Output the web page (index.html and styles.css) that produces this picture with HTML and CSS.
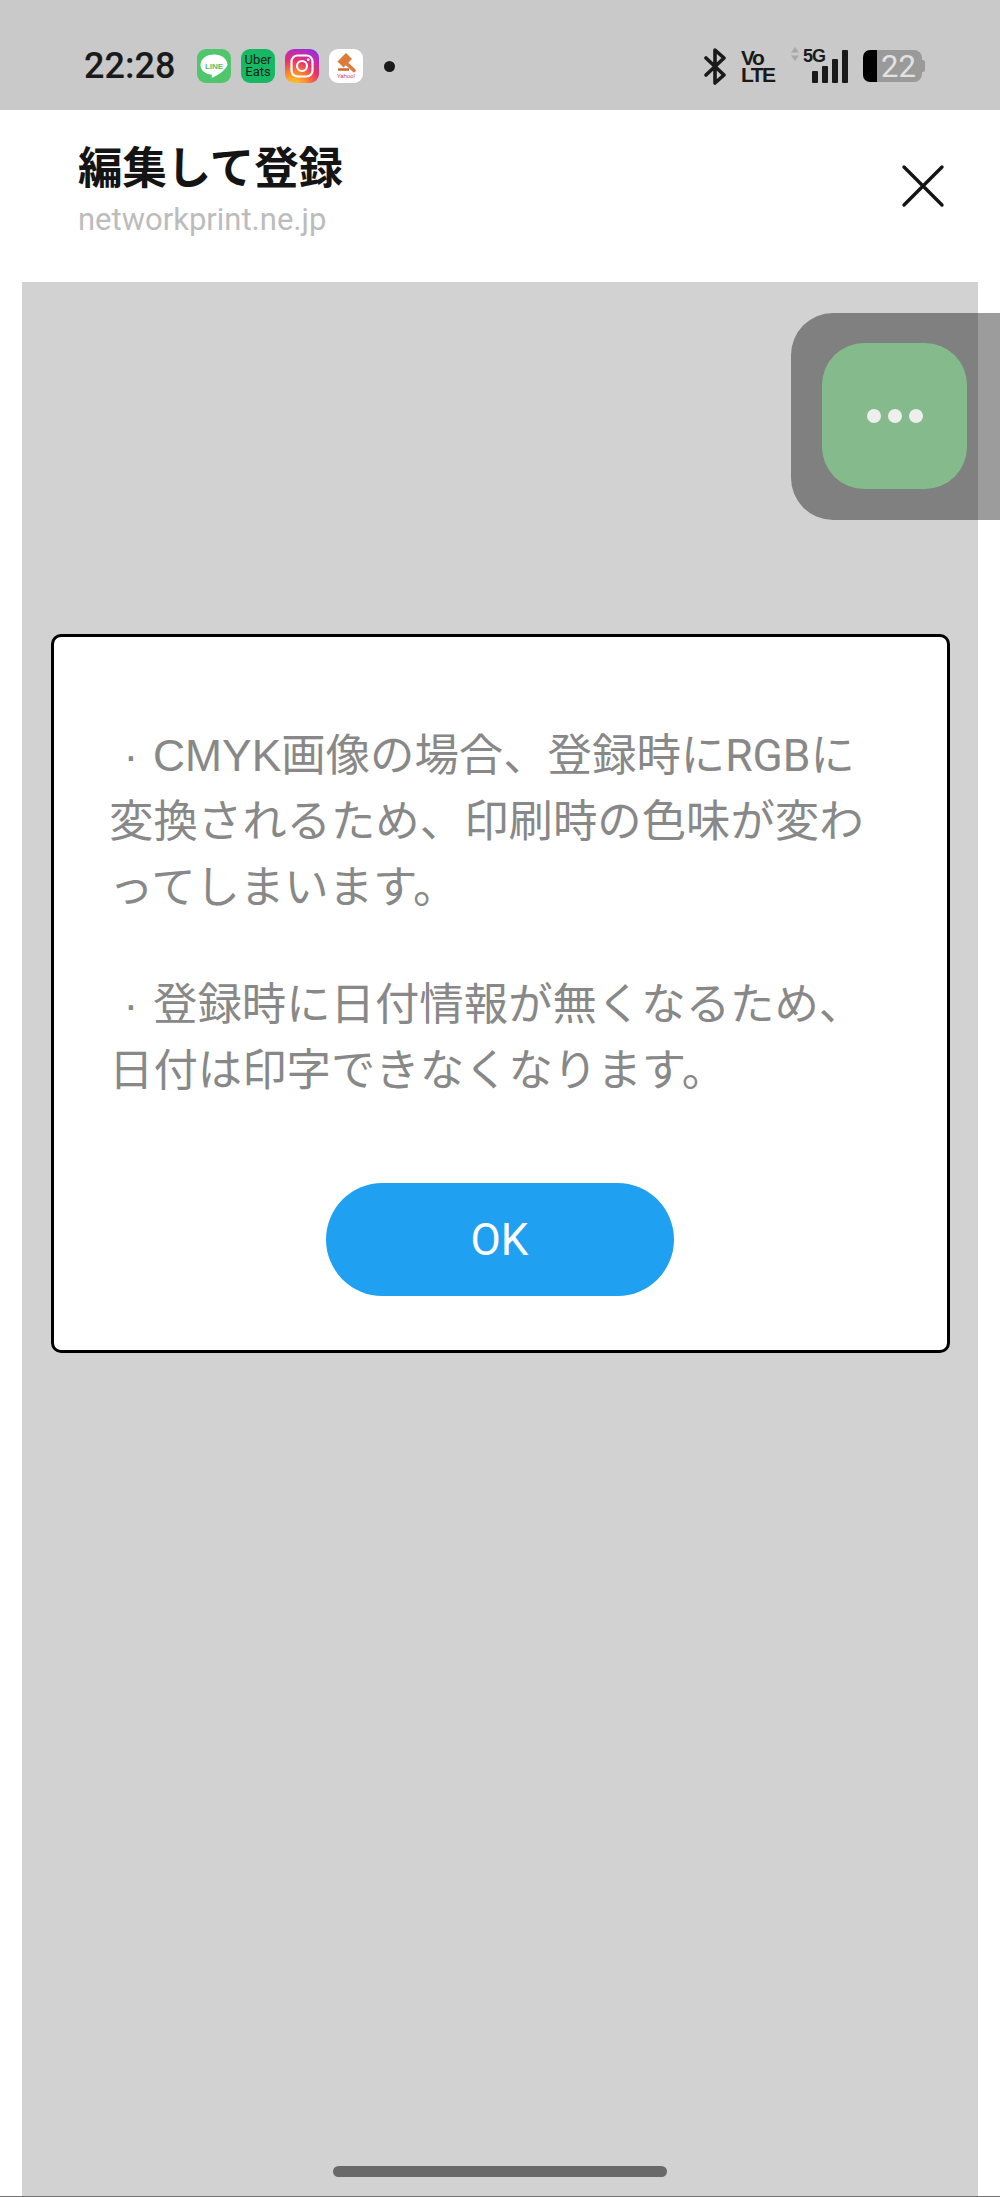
FILE: index.html
```html
<!DOCTYPE html>
<html lang="ja">
<head>
    <meta charset="utf-8">
    <meta name="viewport" content="width=device-width, initial-scale=1.0">
    <title>編集して登録</title>
    <link rel="stylesheet" href="styles.css">
</head>
<body>
<div class="status-bar">
    <span class="status-time">22:28</span>
    <div class="status-apps">
        <span class="app app-line">
            <svg width="34" height="34" viewBox="0 0 34 34"><path d="M17 5.500C9 5.500 3.500 10.300 3.500 16c0 5.200 4.400 8.800 10.500 9.600.8.200 1 .7.700 2.100-.2 1 .4 1.300 1.300.800 3.700-2 12.500-6.800 14.500-12.500C30.500 10.300 25 5.500 17 5.500z" fill="#fff"/><text x="17" y="19.500" text-anchor="middle" class="line-text">LINE</text></svg>
        </span>
        <span class="app app-uber">Uber<br>Eats</span>
        <span class="app app-insta">
            <svg width="34" height="34" viewBox="0 0 34 34"><rect x="6.500" y="6.500" width="21" height="21" rx="6" fill="none" stroke="#fff" stroke-width="2.200"/><circle cx="17" cy="17" r="5" fill="none" stroke="#fff" stroke-width="2.200"/><circle cx="23.200" cy="10.800" r="1.400" fill="#fff"/></svg>
        </span>
        <span class="app app-auction">
            <svg width="34" height="34" viewBox="0 0 34 34"><path d="M16 13l9 8.500" stroke="#e07a3a" stroke-width="3.600" stroke-linecap="round"/><path d="M8.500 12.500L17 4l6 6-8.500 8.500z" fill="#e07a3a"/><path d="M9 20.500h11" stroke="#c9682f" stroke-width="2.400"/><text x="17" y="28.500" text-anchor="middle" class="auction-text">Yahoo!</text></svg>
        </span>
        <span class="status-dot"></span>
    </div>
    <div class="status-icons">
        <svg class="icon-bt" width="22" height="37" viewBox="0 0 22 37"><path d="M2 10l18 17-9 8V2l9 8L2 27" fill="none" stroke="#1a1a1a" stroke-width="3.600" stroke-linejoin="round" stroke-linecap="round"/></svg>
        <span class="volte">Vo<br>LTE</span>
        <svg class="icon-arrows" width="8" height="14" viewBox="0 0 8 14"><path d="M4 0l4 5.500H0zM4 14L0 8.500h8z" fill="#a8a8a8"/></svg>
        <div class="signal">
            <span class="signal-label">5G</span>
            <span class="bar bar1"></span>
            <span class="bar bar2"></span>
            <span class="bar bar3"></span>
            <span class="bar bar4"></span>
        </div>
        <div class="battery">
            <span class="battery-level"></span>
            <span class="battery-rest">22</span>
            <span class="battery-nub"></span>
        </div>
    </div>
</div>

<div class="m-header">
    <div class="m-title">
        <h2>編集して登録</h2>
        <p>networkprint.ne.jp</p>
    </div>
    <svg class="m-close" width="44" height="44" viewBox="0 0 44 44"><path d="M3 3l38 38M41 3L3 41" stroke="#141414" stroke-width="3.400" stroke-linecap="round"/></svg>
</div>

<div class="m-view">
    <div class="dialog">
        <p><span class="mark">·</span>CMYK画像の場合、登録時に<span class="latin">RGB</span>に<br>変換されるため、印刷時の色味が変わ<br>ってしまいます。</p>
        <p><span class="mark">·</span>登録時に日付情報が無くなるため、<br>日付は印字できなくなります。</p>
        <div class="dialog-foot">
            <a class="btn-ok">OK</a>
        </div>
    </div>
</div>
<div class="bottom-line"></div>

<div class="float-menu">
    <div class="float-btn"><i></i><i></i><i></i></div>
</div>
<div class="home-bar"></div>
</body>
</html>
```

FILE: styles.css
```css
html{margin: 0; padding: 0;}
body{margin: 0; padding: 0; width: 1000px; height: 2197px; position: relative; overflow: hidden; background: #fff; font-family: "Liberation Sans", "Noto Sans CJK JP", sans-serif;}

/* status bar */
.status-bar{height: 110px; background: #c9c9c9; display: flex; align-items: center; padding: 22px 75px 0 84px; box-sizing: border-box; color: #1a1a1a;}
.status-time{font-family: Roboto, sans-serif; font-weight: 500; font-size: 36px; width: 113px;}
.status-apps{display: flex; align-items: center; gap: 10px;}
.app{width: 34px; height: 34px; border-radius: 9px; display: block; text-align: center; overflow: hidden;}
.app-line{background: #4fc56c;}
.line-text{font-family: "Liberation Sans", sans-serif; font-size: 8px; font-weight: bold; fill: #4fc56c;}
.app-uber{background: #17b864; color: #10261a; font-family: Roboto, sans-serif; font-size: 13px; line-height: 12px; padding-top: 5px; height: 29px;}
.app-insta{background: radial-gradient(circle at 25% 110%, #fdd835 0%, #fb8c2c 30%, #e8306c 58%, #b52cc0 80%, #6a3be0 100%);}
.app-auction{background: #fff;}
.auction-text{font-family: "Liberation Sans", sans-serif; font-size: 6px; fill: #c8326e;}
.status-dot{width: 11px; height: 11px; border-radius: 50%; background: #1a1a1a; margin-left: 11px;}
.status-icons{margin-left: auto; display: flex; align-items: center;}
.icon-bt{margin-right: 15px;}
.volte{font-weight: bold; font-size: 21px; line-height: 17px; letter-spacing: -1.500px; width: 33px; margin-right: 17px;}
.icon-arrows{align-self: flex-start; margin: -1px 4px 0 0;}
.signal{width: 45px; height: 34px; position: relative; display: flex; align-items: flex-end; gap: 4px; margin-right: 15px; justify-content: flex-end;}
.signal-label{position: absolute; left: 0; top: -2px; font-weight: bold; font-size: 18px; letter-spacing: -1px; line-height: 18px;}
.bar{width: 6px; background: #1a1a1a; border-radius: 1px;}
.bar1{height: 12px;}
.bar2{height: 17px;}
.bar3{height: 24px;}
.bar4{height: 33px;}
.battery{display: flex; align-items: center; height: 32px; width: 62px;}
.battery-level{width: 14px; height: 32px; background: #000; border-radius: 7px 0 0 7px;}
.battery-rest{flex: 1; height: 32px; background: #9a9a9a; border-radius: 0 8px 8px 0; color: #e2e2e2; font-family: Roboto, sans-serif; font-size: 31px; line-height: 33px; padding-left: 4px;}
.battery-nub{width: 3px; height: 12px; background: #9a9a9a; border-radius: 0 2px 2px 0;}

/* header */
.m-header{height: 172px; display: flex; justify-content: space-between; padding: 31px 55px 0 78px; box-sizing: border-box;}
.m-title h2{margin: 0; font-size: 44.400px; line-height: 56px; font-weight: bold; color: #141414;}
.m-title p{margin: 5px 0 0; font-family: Roboto, sans-serif; font-size: 31px; line-height: 36px; color: #bcbcbc;}
.m-close{margin-top: 23px;}

/* content */
.m-view{margin: 0 22px; height: 1914px; background: #d2d2d2; padding: 352px 28px 0 29px; box-sizing: border-box;}
.bottom-line{height: 1px; background: #707070;}
.dialog{background: #fff; border: 3px solid #000; border-radius: 10px; height: 719px; box-sizing: border-box; padding: 86px 0 0 55px;}
.dialog p{margin: 0 0 51px; font-size: 44.400px; line-height: 66px; color: #888;}
.mark{display: inline-block; width: 44px; text-align: center;}
.latin{font-family: Roboto, sans-serif;}
.dialog-foot{display: flex; justify-content: center; padding: 28px 57px 0 0;}
.btn-ok{width: 348px; height: 113px; border-radius: 57px; background: #20a0f1; color: #fff; display: flex; align-items: center; justify-content: center; font-family: Roboto, sans-serif; font-size: 44px;}

/* overlays */
.float-menu{position: absolute; top: 313px; left: 791px; width: 209px; height: 207px; padding: 30px 0 0 31px; box-sizing: border-box; background: rgba(0, 0, 0, .39); border-radius: 42px 0 0 42px;}
.float-btn{width: 145px; height: 146px; background: #84ba8c; border-radius: 42px; display: flex; align-items: center; justify-content: center; gap: 7px;}
.float-btn i{width: 14px; height: 14px; border-radius: 50%; background: #eee;}
.home-bar{position: absolute; left: 333px; top: 2166px; width: 334px; height: 11px; border-radius: 6px; background: #696969;}
```
